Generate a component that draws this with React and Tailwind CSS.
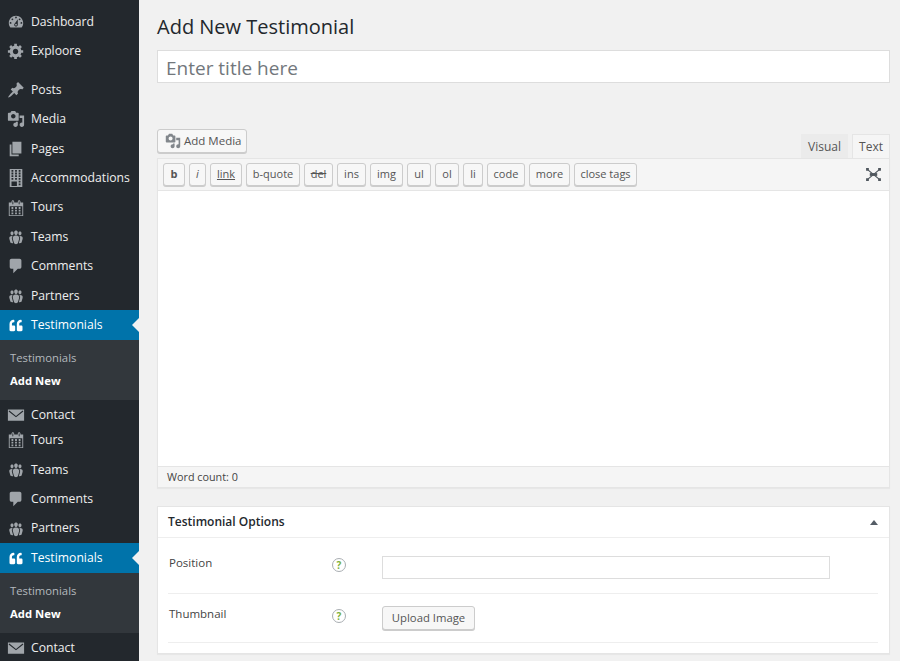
import React from "react";
import { FaQuoteLeft } from "react-icons/fa";

const D = {
  dashboard: "M3.76 16h12.48c1.1-1.37 1.76-3.11 1.76-5 0-4.42-3.58-8-8-8s-8 3.58-8 8c0 1.89.66 3.63 1.76 5zM10 4c.55 0 1 .45 1 1s-.45 1-1 1-1-.45-1-1 .45-1 1-1zM6 6c.55 0 1 .45 1 1s-.45 1-1 1-1-.45-1-1 .45-1 1-1zm8 0c.55 0 1 .45 1 1s-.45 1-1 1-1-.45-1-1 .45-1 1-1zm-5.37 5.55L12 7v6c0 1.1-.9 2-2 2s-2-.9-2-2c0-.57.24-1.08.63-1.45zM4 10c.55 0 1 .45 1 1s-.45 1-1 1-1-.45-1-1 .45-1 1-1zm12 0c.55 0 1 .45 1 1s-.45 1-1 1-1-.45-1-1 .45-1 1-1zm-5 3c0-.55-.45-1-1-1s-1 .45-1 1 .45 1 1 1 1-.45 1-1z",
  gear: "M18 12h-2.18c-.17.7-.44 1.35-.81 1.93l1.54 1.54-2.1 2.1-1.54-1.54c-.58.36-1.23.63-1.91.79V19H8v-2.18c-.68-.16-1.33-.43-1.91-.79l-1.54 1.54-2.12-2.12 1.54-1.54c-.36-.58-.63-1.23-.79-1.91H1V9.03h2.17c.16-.7.44-1.35.8-1.94L2.43 5.55l2.1-2.1 1.54 1.54c.58-.37 1.24-.64 1.93-.81V2h3v2.18c.68.16 1.33.43 1.91.79l1.54-1.54 2.12 2.12-1.54 1.54c.36.59.64 1.24.8 1.94H18V12zm-8.5 1.5c1.66 0 3-1.34 3-3s-1.34-3-3-3-3 1.34-3 3 1.34 3 3 3z",
  pin: "M10.44 3.02l1.82-1.82 6.36 6.35-1.83 1.82c-1.05-.68-2.48-.57-3.41.36l-.75.75c-.92.93-1.04 2.35-.35 3.41l-1.83 1.82-2.41-2.41-2.8 2.79c-.42.42-3.38 2.71-3.8 2.29s1.86-3.39 2.28-3.81l2.79-2.79L4.1 9.36l1.83-1.82c1.05.69 2.48.57 3.4-.36l.75-.75c.93-.92 1.05-2.35.36-3.41z",
  media: "M13 11V4c0-.55-.45-1-1-1h-1.67L9 1H5L3.67 3H2c-.55 0-1 .45-1 1v7c0 .55.45 1 1 1h10c.55 0 1-.45 1-1zM7 4.5c1.38 0 2.5 1.12 2.5 2.5S8.38 9.5 7 9.5 4.5 8.38 4.5 7 5.62 4.5 7 4.5zM14 6h5v10.5c0 1.38-1.12 2.5-2.5 2.5S14 17.88 14 16.5s1.12-2.5 2.5-2.5c.17 0 .34.02.5.05V9h-3V6zm-4 8.05V13h2v3.5c0 1.38-1.12 2.5-2.5 2.5S7 17.88 7 16.5 8.12 14 9.5 14c.17 0 .34.02.5.05z",
  page: "M6 15V2h10v13H6zm-1 1h8v2H3V5h2v11z",
  building: "M3 20h14V0H3v20zM7 3H5V1h2v2zm4 0H9V1h2v2zm4 0h-2V1h2v2zM7 6H5V4h2v2zm4 0H9V4h2v2zm4 0h-2V4h2v2zM7 9H5V7h2v2zm4 0H9V7h2v2zm4 0h-2V7h2v2zm-8 3H5v-2h2v2zm4 0H9v-2h2v2zm4 0h-2v-2h2v2zm-4 7H5v-5h6v5zm4-4h-2v-2h2v2zm0 3h-2v-2h2v2z",
  calendar: "M15 4h3v15H2V4h3V3c0-.41.15-.76.44-1.06.29-.29.65-.44 1.06-.44s.77.15 1.06.44c.29.3.44.65.44 1.06v1h4V3c0-.41.15-.76.44-1.06.29-.29.65-.44 1.06-.44s.77.15 1.06.44c.29.3.44.65.44 1.06v1zM6 3v2.5c0 .14.05.26.15.36.09.09.21.14.35.14s.26-.05.35-.14c.1-.1.15-.22.15-.36V3c0-.14-.05-.26-.15-.35-.09-.1-.21-.15-.35-.15s-.26.05-.35.15c-.1.09-.15.21-.15.35zm7 0v2.5c0 .14.05.26.14.36.1.09.22.14.36.14s.26-.05.36-.14c.09-.1.14-.22.14-.36V3c0-.14-.05-.26-.14-.35-.1-.1-.22-.15-.36-.15s-.26.05-.36.15c-.09.09-.14.21-.14.35zm4 15V8H3v10h14zM7 9v2H5V9h2zm2 0h2v2H9V9zm4 2V9h2v2h-2zm-6 1v2H5v-2h2zm2 0h2v2H9v-2zm4 2v-2h2v2h-2zm-6 1v2H5v-2h2zm4 2H9v-2h2v2zm4 0h-2v-2h2v2z",
  groups: "M8.03 4.46c-.29 1.28.55 3.46 1.97 3.46 1.41 0 2.25-2.18 1.96-3.46-.22-.98-1.08-1.63-1.96-1.63-.89 0-1.74.65-1.97 1.63zm-4.13.9c-.25 1.08.47 2.93 1.67 2.93s1.92-1.85 1.67-2.93c-.19-.83-.92-1.39-1.67-1.39s-1.48.56-1.67 1.39zm8.86 0c-.25 1.08.47 2.93 1.66 2.93 1.2 0 1.92-1.85 1.67-2.93-.19-.83-.92-1.39-1.67-1.39-.74 0-1.47.56-1.66 1.39zm-.59 11.43l1.25-4.3C14.2 10 12.71 8.47 10 8.47c-2.72 0-4.21 1.53-3.44 4.02l1.26 4.3C8.05 17.51 9 18 10 18c.98 0 1.94-.49 2.17-1.21zm-6.1-7.63c-.49.67-.96 1.83-.42 3.59l1.12 3.79c-.34.2-.77.31-1.2.31-.85 0-1.65-.41-1.85-1.03l-1.07-3.65c-.65-2.11.61-3.4 2.92-3.4.27 0 .54.02.79.06-.1.1-.2.22-.29.33zm8.35-.39c2.31 0 3.58 1.29 2.92 3.4l-1.07 3.65c-.2.62-1 1.03-1.85 1.03-.43 0-.86-.11-1.2-.31l1.11-3.77c.55-1.78.08-2.94-.42-3.61-.08-.11-.18-.23-.28-.33.25-.04.51-.06.79-.06z",
  comment: "M5 2h9c1.1 0 2 .9 2 2v7c0 1.1-.9 2-2 2h-2l-5 5v-5H5c-1.1 0-2-.9-2-2V4c0-1.1.9-2 2-2z",
  mail: "M1 4h18v12.5H1V4zM2.6 5l7.4 6 7.4-6 .8 1-8.2 6.6L1.8 6l.8-1z",
};

function Glyph({ d, className }) {
  return (
    <svg viewBox="0 0 20 20" className={className} fill="currentColor" fillRule="evenodd" aria-hidden="true">
      <path d={d} />
    </svg>
  );
}

function Item({ icon, label, extra = "" }) {
  return (
    <div className={`flex h-[29.4px] shrink-0 items-center text-[#eeeeee] ${extra}`}>
      <span className="flex w-[31px] shrink-0 justify-center text-[#a0a5aa]">
        <Glyph d={D[icon]} className="h-[18px] w-[18px]" />
      </span>
      <span>{label}</span>
    </div>
  );
}

function Active() {
  return (
    <>
      <div className="relative flex h-[29.4px] shrink-0 items-center bg-[#0073aa] text-white">
        <span className="flex w-[31px] shrink-0 justify-center pl-px">
          <FaQuoteLeft className="h-[13px] w-[14px]" />
        </span>
        <span>Testimonials</span>
        <span className="absolute right-0 top-[8px] h-0 w-0 border-y-[7px] border-r-[7px] border-y-transparent border-r-[#f1f1f1]" />
      </div>
      <div className="flex h-[60.6px] shrink-0 flex-col bg-[#32373c] pl-[10px] pt-[7px] text-[11.3px]">
        <div className="flex h-[23px] items-center text-[#b4b9be]">Testimonials</div>
        <div className="flex h-[23px] items-center font-bold text-white">Add New</div>
      </div>
    </>
  );
}

const tags = [
  ["b", "w-[22px] font-bold"],
  ["i", "w-[17px] italic"],
  ["link", "w-[32px] underline"],
  ["b-quote", "w-[54px]"],
  ["del", "w-[29px] line-through"],
  ["ins", "w-[29px]"],
  ["img", "w-[33px]"],
  ["ul", "w-[24px]"],
  ["ol", "w-[24px]"],
  ["li", "w-[20px]"],
  ["code", "w-[38px]"],
  ["more", "w-[41px]"],
  ["close tags", "w-[63px]"],
];

function Help() {
  return (
    <span className="flex h-[14px] w-[14px] items-center justify-center rounded-full border border-[#a9aeb2] bg-white text-[10px] font-bold leading-none text-[#7ab03c]">
      ?
    </span>
  );
}

export default function App() {
  return (
    <div
      className="flex h-[661px] w-[900px] overflow-hidden bg-[#f1f1f1] text-[12.2px]"
      style={{ fontFamily: '"Open Sans", "Liberation Sans", sans-serif' }}
    >
      <aside className="flex h-full w-[139px] shrink-0 flex-col overflow-hidden bg-[#23282d] pt-[7.1px]">
        <Item icon="dashboard" label="Dashboard" />
        <Item icon="gear" label="Exploore" extra="mb-[9.4px]" />
        <Item icon="pin" label="Posts" />
        <Item icon="media" label="Media" />
        <Item icon="page" label="Pages" />
        <Item icon="building" label="Accommodations" />
        <Item icon="calendar" label="Tours" />
        <Item icon="groups" label="Teams" />
        <Item icon="comment" label="Comments" />
        <Item icon="groups" label="Partners" />
        <Active />
        <Item icon="mail" label="Contact" extra="mb-[-4px]" />
        <Item icon="calendar" label="Tours" />
        <Item icon="groups" label="Teams" />
        <Item icon="comment" label="Comments" />
        <Item icon="groups" label="Partners" />
        <Active />
        <Item icon="mail" label="Contact" />
      </aside>

      <main className="flex min-w-0 flex-1 flex-col pl-[18px] pr-[10px]">
        <h1 className="mt-[13px] h-[28px] text-[20px] leading-[28px] text-[#23282d]">Add New Testimonial</h1>
        <div className="mt-[9px] flex h-[33px] items-center border border-[#dddddd] bg-white pl-[8px] pt-[4px] text-[19px] text-[#72777c]">
          Enter title here
        </div>

        <div className="mt-[46px] flex h-[29px] items-start justify-between">
          <button className="flex h-[24px] w-[90px] items-center gap-[3px] rounded-[3px] border border-[#cccccc] bg-[#f7f7f7] pl-[7px] text-[11.5px] text-[#555555] shadow-[0_1px_0_#cccccc]">
            <Glyph d={D.media} className="h-[16px] w-[16px] text-[#82878c]" />
            Add Media
          </button>
          <div className="mt-[5px] flex h-[24px] items-stretch gap-[4px] text-[12px]">
            <div className="flex w-[47px] items-center justify-center bg-[#ebebeb] pt-px text-[#555555]">Visual</div>
            <div className="flex w-[38px] items-center justify-center border border-b-0 border-[#e5e5e5] bg-[#f5f5f5] text-[#555555]">Text</div>
          </div>
        </div>

        <div className="flex h-[330px] shrink-0 flex-col border border-t-0 border-[#e5e5e5] shadow-[0_1px_1px_rgba(0,0,0,0.04)]">
          <div className="flex h-[33px] shrink-0 items-center justify-between border-y border-[#e5e5e5] bg-[#f5f5f5] pl-[5px] pr-[8px]">
            <div className="flex gap-[4px]">
              {tags.map(([t, c]) => (
                <button
                  key={t}
                  className={`flex h-[23px] items-center justify-center rounded-[3px] border border-[#cccccc] bg-[#f7f7f7] text-[11px] text-[#555555] shadow-[0_1px_0_#cccccc] ${c}`}
                >
                  {t}
                </button>
              ))}
            </div>
            <svg viewBox="0 0 16 14" className="h-[13px] w-[15px] text-[#50575e]" aria-hidden="true">
              <path d="M2 2l12 10M14 2L2 12" stroke="currentColor" strokeWidth="1.3" fill="none" />
              <path d="M4 5.5h8v3H4z" fill="currentColor" />
              <path d="M0 0h3v3H0zM13 0h3v3h-3zM0 11h3v3H0zM13 11h3v3h-3z" fill="currentColor" />
            </svg>
          </div>
          <div className="flex-1 bg-white" />
          <div className="flex h-[21px] shrink-0 items-center border-t border-[#e5e5e5] bg-[#f5f5f5] pl-[9px] text-[10.8px] text-[#444444]">
            Word count: 0
          </div>
        </div>

        <section className="mt-[18px] h-[148px] shrink-0 border border-[#e5e5e5] bg-white pl-[10px] pr-[11px] shadow-[0_1px_1px_rgba(0,0,0,0.04)]">
          <div className="-ml-[10px] -mr-[11px] flex h-[31px] items-center justify-between border-b border-[#eeeeee] pl-[10px] pr-[11px]">
            <span className="text-[12px] font-semibold text-[#23282d]">Testimonial Options</span>
            <span className="h-0 w-0 border-x-[4px] border-b-[5px] border-x-transparent border-b-[#555d66]" />
          </div>
          <div className="grid h-[56px] grid-cols-[164px_50px_1fr] border-b border-[#eeeeee] pt-[18px]">
            <span className="-mt-[1px] pl-px text-[11.5px] leading-[16px] text-[#444444]">Position</span>
            <span className="pt-[2px]"><Help /></span>
            <div className="h-[23px] w-[448px] border border-[#dddddd] bg-white" />
          </div>
          <div className="grid h-[49px] grid-cols-[164px_50px_1fr] border-b border-[#eeeeee] pt-[12px]">
            <span className="pl-px text-[11.5px] leading-[16px] text-[#444444]">Thumbnail</span>
            <span className="pt-[3px]"><Help /></span>
            <button className="flex h-[24px] w-[93px] items-center justify-center rounded-[3px] border border-[#cccccc] bg-[#f7f7f7] text-[11.3px] text-[#555555] shadow-[0_1px_0_#cccccc]">
              Upload Image
            </button>
          </div>
        </section>
      </main>
    </div>
  );
}
